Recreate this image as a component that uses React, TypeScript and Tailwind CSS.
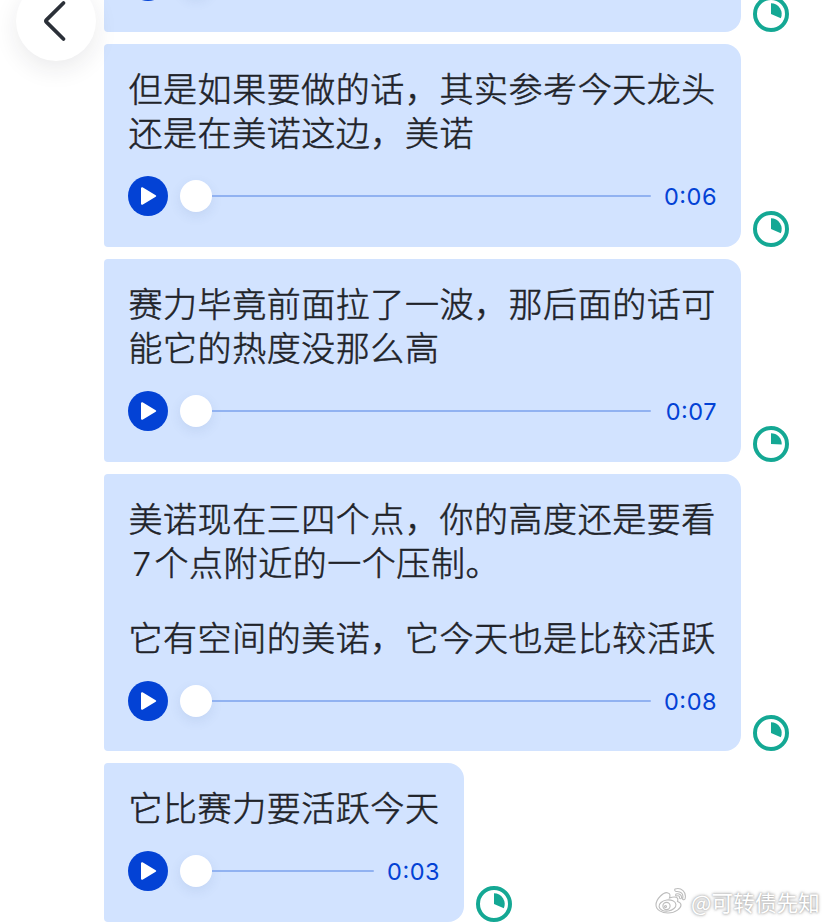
import type { ReactNode } from "react";

type Message = {
  paragraphs: ReactNode[];
  time: string;
  compact?: boolean;
  pie: string;
};

const WIDE_PIE = "M18 18V7.3A10.7 10.7 0 0 1 27.8 22.3Z";
const QUARTER_PIE = "M18 18V7.3A10.7 10.7 0 0 1 28.7 18.5Z";

const messages: Message[] = [
  { paragraphs: [<>&nbsp;<br />&nbsp;</>], time: "", pie: WIDE_PIE },
  {
    paragraphs: [<>但是如果要做的话，其实参考今天龙头<br />还是在美诺这边，美诺</>],
    time: "0:06",
    pie: WIDE_PIE,
  },
  {
    paragraphs: [<>赛力毕竟前面拉了一波，那后面的话可<br />能它的热度没那么高</>],
    time: "0:07",
    pie: QUARTER_PIE,
  },
  {
    paragraphs: [
      <>
        美诺现在三四个点，你的高度还是要看<br />
        <span className="inline-block w-[26px] pl-1 font-['Inter',sans-serif] text-[33px] leading-none [-webkit-text-stroke:0.2px_#1f2329]">7</span>个点附近的一个压制。
      </>,
      <>它有空间的美诺，它今天也是比较活跃</>,
    ],
    time: "0:08",
    pie: WIDE_PIE,
  },
  { paragraphs: [<>它比赛力要活跃今天</>], time: "0:03", compact: true, pie: WIDE_PIE },
];

function Player({ time }: { time: string }) {
  return (
    <div className="flex h-10 items-center">
      <svg className="h-10 w-10 shrink-0" viewBox="0 0 40 40">
        <circle cx="20" cy="20" r="20" fill="#0342d5" />
        <path d="M14 12.2V27.8L27.2 20Z" fill="#fff" stroke="#fff" strokeWidth="2" strokeLinejoin="round" />
      </svg>
      <div className="ml-3 h-8 w-8 shrink-0 rounded-full bg-white shadow-[0_4px_12px_rgba(60,90,140,0.1)]" />
      <div className="h-0.5 grow rounded-r-full bg-[#91b2f1]" />
      <div className="w-[66px] shrink-0 pt-0.5 text-right font-['Inter',sans-serif] text-[23.5px] leading-10 tracking-[0.5px] text-[#0342d5] [font-feature-settings:'case']">
        {time}
      </div>
    </div>
  );
}

function Bubble({ message }: { message: Message }) {
  return (
    <div className="flex shrink-0 items-end gap-3">
      <div
        className={`rounded-l rounded-r-2xl bg-[#d2e3ff] px-6 pt-[22px] ${
          message.compact ? "w-[360px] pb-[31px]" : message.paragraphs.length > 1 ? "w-[637px] pb-[30px]" : "w-[637px] pb-[31px]"
        }`}
      >
        <div className="mb-[22px] flex flex-col gap-[31px] whitespace-nowrap pl-[0.5px] text-[34px] font-light leading-[44px] tracking-[0.55px] text-[#1f2329] [-webkit-text-stroke:0.55px_#1f2329]">
          {message.paragraphs.map((paragraph, i) => (
            <p key={i}>{paragraph}</p>
          ))}
        </div>
        <Player time={message.time} />
      </div>
      <svg className="h-9 w-9 shrink-0" viewBox="0 0 36 36">
        <circle cx="18" cy="18" r="16" fill="#fff" stroke="#14a894" strokeWidth="4" />
        <path d={message.pie} fill="#14a894" />
      </svg>
    </div>
  );
}

export default function App() {
  return (
    <main className="relative h-[923px] w-[828px] overflow-hidden bg-white font-['Noto_Sans_CJK_SC',sans-serif]">
      <div className="-mt-[171px] flex flex-col gap-3 pl-[104px]">
        {messages.map((message, i) => (
          <Bubble key={i} message={message} />
        ))}
      </div>
      <button className="absolute -top-[19px] left-4 h-20 w-20 rounded-full bg-white shadow-[0_8px_24px_rgba(31,35,41,0.09)]">
        <svg className="h-20 w-20" viewBox="0 0 80 80" fill="none" stroke="#2b3038" strokeWidth="3.8" strokeLinecap="round" strokeLinejoin="round">
          <path d="M47.500 22L30.500 38.800Q29.400 40 30.500 41.200L47.500 58" />
        </svg>
      </button>
      <div className="absolute left-[655px] top-[889px] flex items-center gap-1 whitespace-nowrap leading-[34px] text-white">
        <svg className="-mt-1 h-8 w-8" viewBox="0 0 32 32" fill="none" stroke="#bdbdbd" strokeWidth="1.1">
          <path fill="#fff" d="M13 7C9 5 1 13 1 19C1 24 7 27 13 27C21 27 26 22 26 19C26 17 24 16 22.5 15.5C24 11 20 10 14.5 12C15.5 9 15 7.5 13 7Z" />
          <ellipse cx="12.5" cy="19.5" rx="8.5" ry="5.5" transform="rotate(-8 12.5 19.5)" />
          <circle cx="11.5" cy="20" r="3.6" />
          <circle cx="10.5" cy="20.5" r="1" />
          <path fill="#fff" d="M20 3C26 1 32 6 30 13Q29 14.500 27.500 13C29 8 26 5 21 5.500Q19 4.500 20 3ZM21 8C24 7 27 9 26.500 12Q25.500 13.500 24.500 12C24.800 10 23.500 9.500 21.500 10Q20 9.500 21 8Z" />
        </svg>
        <span className="-mt-1 text-[21.5px] tracking-[0.2px] [text-shadow:0_0_2px_#aaa,0_0_3px_#bbb,0_0_4px_#ccc]">@可转债先知</span>
      </div>
    </main>
  );
}
